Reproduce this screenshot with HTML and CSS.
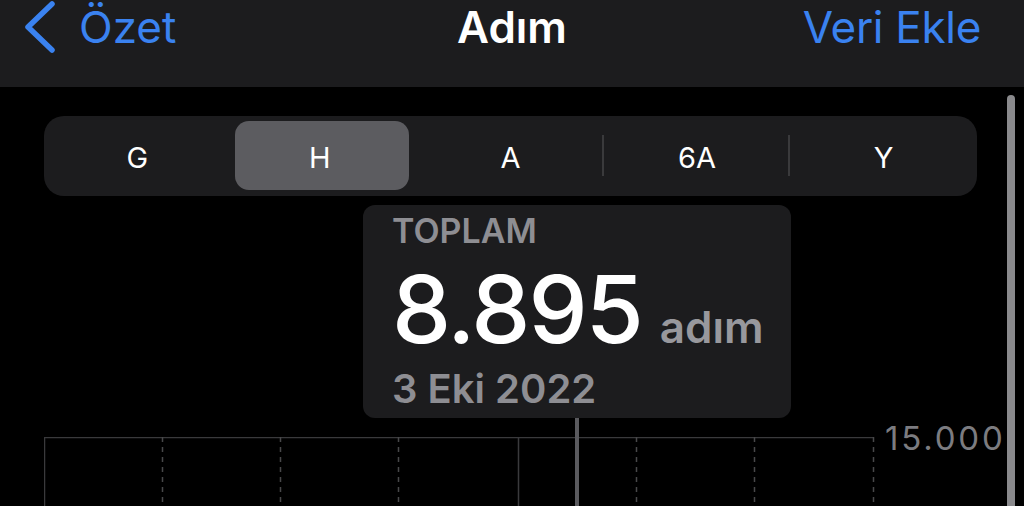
FILE: index.html
```html
<!DOCTYPE html>
<html lang="tr">
<head>
<meta charset="utf-8">
<title>Adım</title>
<link rel="stylesheet" href="styles.css">
</head>
<body>
<header class="nav">
  <a class="nav-back">
    <svg class="chev" width="36" height="54" viewBox="0 0 36 54"><path d="M30 4 L6 27 L30 50" fill="none" stroke="#3a82f0" stroke-width="5.5" stroke-linecap="round" stroke-linejoin="round"/></svg>
    <span>Özet</span>
  </a>
  <div class="nav-title">Adım</div>
  <a class="nav-action">Veri Ekle</a>
</header>
<main class="content">
  <div class="segmented">
    <div class="seg">G</div>
    <div class="seg selected">H</div>
    <div class="seg">A</div>
    <div class="seg sep">6A</div>
    <div class="seg sep">Y</div>
  </div>

  <div class="chart-row">
    <svg class="grid" width="832" height="70" viewBox="0 0 832 70">
      <line x1="0" y1="0.5" x2="830" y2="0.5" stroke="#3a3a3c" stroke-width="1.5"/>
      <line x1="0.5" y1="0" x2="0.5" y2="70" stroke="#3a3a3c" stroke-width="1.5"/>
      <line x1="474.5" y1="0" x2="474.5" y2="70" stroke="#3a3a3c" stroke-width="1.5"/>
      <g stroke="#48484a" stroke-width="1.5" stroke-dasharray="5 5">
        <line x1="118.5" y1="0" x2="118.5" y2="70"/>
        <line x1="236.5" y1="0" x2="236.5" y2="70"/>
        <line x1="354.5" y1="0" x2="354.5" y2="70"/>
        <line x1="592.5" y1="0" x2="592.5" y2="70"/>
        <line x1="710.5" y1="0" x2="710.5" y2="70"/>
        <line x1="829.5" y1="0" x2="829.5" y2="70"/>
      </g>
    </svg>
    <div class="axis-label">15.000</div>
  </div>

  <div class="cursor-line"></div>
  <div class="tooltip">
    <div class="tt-label">TOPLAM</div>
    <div class="tt-value"><span class="num">8.895</span><span class="unit">adım</span></div>
    <div class="tt-date">3 Eki 2022</div>
  </div>
  <div class="scrollbar"></div>
</main>
</body>
</html>
```
FILE: styles.css
```css
* { box-sizing: border-box; }
html, body {
  margin: 0;
  padding: 0;
  background: #000;
  width: 1024px;
  height: 506px;
  overflow: hidden;
  font-family: Inter, "Noto Sans", "DejaVu Sans", sans-serif;
}
.nav {
  height: 87px;
  background: #1c1c1e;
  display: grid;
  grid-template-columns: 1fr auto 1fr;
  align-items: start;
  padding: 1px 45px 0 45px;
  line-height: 52px;
  font-size: 44px;
}
.nav-back {
  display: flex;
  align-items: flex-start;
  color: #3a82f0;
  gap: 21px;
  margin-left: -23px;
}
.chev { display: block; margin-top: -1px; }
.nav-title {
  color: #fff;
  font-weight: 600;
  text-align: center;
}
.nav-action {
  color: #3a82f0;
  text-align: right;
  justify-self: end;
  letter-spacing: -0.3px;
  margin-right: -2px;
}
.content {
  position: relative;
  height: 419px;
  padding: 29px 0 0 44px;
}
.segmented {
  width: 933px;
  height: 80px;
  background: #1c1c1e;
  border-radius: 20px;
  padding: 5px 0;
  display: grid;
  grid-template-columns: repeat(5, 1fr);
}
.seg {
  position: relative;
  display: flex;
  align-items: center;
  justify-content: center;
  color: #fff;
  font-size: 29px;
  font-weight: 400;
  padding-top: 3px;
}
.seg.selected {
  background: #5c5c60;
  border-radius: 14px;
  margin: 0 8px 1px 4px;
  padding-right: 4px;
}
.seg.sep::before {
  content: "";
  position: absolute;
  left: -2px;
  top: 14px;
  bottom: 15px;
  width: 2px;
  background: #3a3a3c;
}
.chart-row {
  margin-top: 241px;
  display: flex;
  align-items: flex-start;
}
.grid { display: block; flex: none; }
.axis-label {
  margin-top: -17px;
  margin-left: 9px;
  color: #7c7c80;
  font-size: 33px;
  line-height: 36px;
  letter-spacing: 2.8px;
}
.cursor-line {
  position: absolute;
  left: 575px;
  top: 331px;
  width: 4px;
  height: 100px;
  background: #5a5a5e;
}
.tooltip {
  position: absolute;
  left: 363px;
  top: 118px;
  width: 428px;
  height: 213px;
  background: #1c1c1e;
  border-radius: 12px;
  padding: 6px 0 0 29px;
}
.tt-label {
  color: #8e8e93;
  font-size: 34px;
  font-weight: 600;
  line-height: 40px;
}
.tt-value {
  display: flex;
  align-items: baseline;
  gap: 18px;
  line-height: 116px;
  height: 116px;
}
.num {
  color: #fff;
  font-size: 94px;
  font-weight: 500;
  letter-spacing: -2px;
}
.unit {
  color: #98989d;
  font-size: 44px;
  font-weight: 600;
}
.tt-date {
  color: #8e8e93;
  font-size: 40px;
  font-weight: 600;
  line-height: 44px;
}
.scrollbar {
  position: absolute;
  left: 1007px;
  top: 8px;
  width: 8px;
  height: 420px;
  border-radius: 4px;
  background: #8a8a8d;
}
```
